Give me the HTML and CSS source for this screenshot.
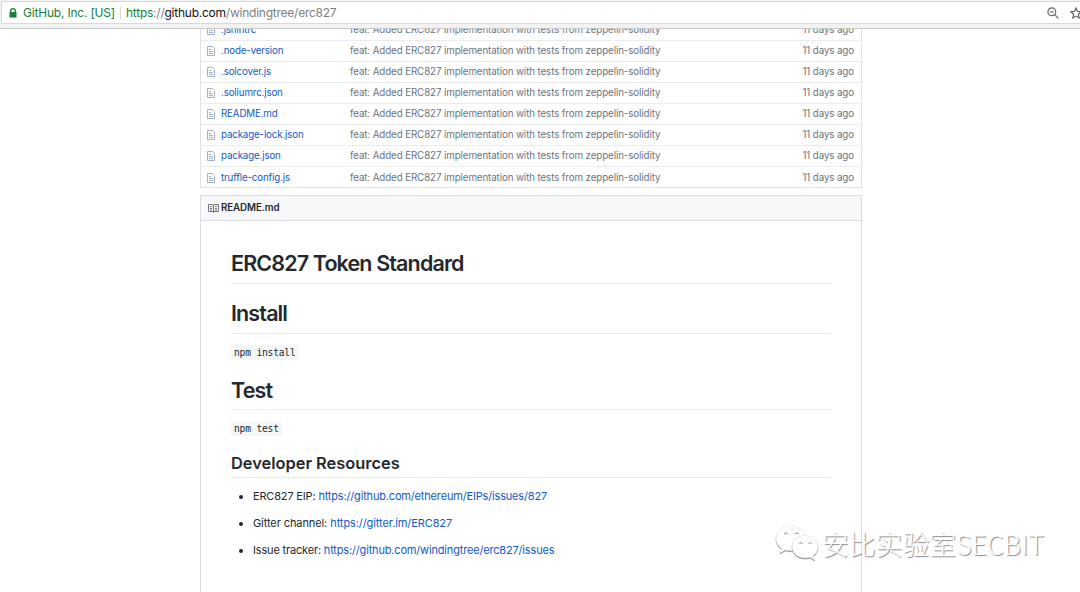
FILE: index.html
```html
<!DOCTYPE html>
<html lang="en">
<head>
    <meta charset="UTF-8">
    <meta name="viewport" content="width=device-width, initial-scale=1.0">
    <title>windingtree/erc827</title>
    <link rel="stylesheet" href="styles.css">
</head>
<body>

<svg class="defs" width="0" height="0">
    <symbol id="file" viewBox="0 0 9 11">
        <path d="M.5 1.500h5L7.500 3.500V10.500h-7zM2 4.500h2M2 6.500h4M2 8.500h4"/>
    </symbol>
</svg>

<div class="toolbar">
    <div class="address">
        <svg class="lock" viewBox="0 0 8 10"><path d="M1 4V3a3 3 0 0 1 6 0v1h.5v5.500h-7V4zm1.300 0h3.400V3a1.700 1.700 0 0 0-3.400 0z"/></svg>
        <span class="company">GitHub, Inc. [US]</span>
        <span class="divider"></span>
        <span class="url"><span class="scheme">https</span>://<span class="host">github.com</span>/windingtree/erc827</span>
        <svg class="zoom" viewBox="0 0 12 12"><circle cx="4.800" cy="4.800" r="3.900"/><path d="M3 4.800h3.600M7.700 7.700l3.600 3.600"/></svg>
        <svg class="star" viewBox="0 0 12 12"><path d="M6 1l1.500 3.400 3.700.4-2.800 2.500.8 3.700L6 9.100 2.800 11l.8-3.700L.8 4.800l3.700-.4z"/></svg>
    </div>
</div>

<div class="page">
    <div class="files">
        <div class="row"><svg class="icon"><use href="#file"/></svg><a>.jshintrc</a><span class="message">feat: Added ERC827 implementation with tests from zeppelin-solidity</span><span class="age">11 days ago</span></div>
        <div class="row"><svg class="icon"><use href="#file"/></svg><a>.node-version</a><span class="message">feat: Added ERC827 implementation with tests from zeppelin-solidity</span><span class="age">11 days ago</span></div>
        <div class="row"><svg class="icon"><use href="#file"/></svg><a>.solcover.js</a><span class="message">feat: Added ERC827 implementation with tests from zeppelin-solidity</span><span class="age">11 days ago</span></div>
        <div class="row"><svg class="icon"><use href="#file"/></svg><a>.soliumrc.json</a><span class="message">feat: Added ERC827 implementation with tests from zeppelin-solidity</span><span class="age">11 days ago</span></div>
        <div class="row"><svg class="icon"><use href="#file"/></svg><a>README.md</a><span class="message">feat: Added ERC827 implementation with tests from zeppelin-solidity</span><span class="age">11 days ago</span></div>
        <div class="row"><svg class="icon"><use href="#file"/></svg><a>package-lock.json</a><span class="message">feat: Added ERC827 implementation with tests from zeppelin-solidity</span><span class="age">11 days ago</span></div>
        <div class="row"><svg class="icon"><use href="#file"/></svg><a>package.json</a><span class="message">feat: Added ERC827 implementation with tests from zeppelin-solidity</span><span class="age">11 days ago</span></div>
        <div class="row"><svg class="icon"><use href="#file"/></svg><a>truffle-config.js</a><span class="message">feat: Added ERC827 implementation with tests from zeppelin-solidity</span><span class="age">11 days ago</span></div>
    </div>

    <div class="readme">
        <div class="readme-title">
            <svg class="book" viewBox="0 0 11 10"><path d="M.5 1.500h4.500l.5.500.5-.5h4.500v7H6l-.5 1-.5-1H.5zM5.500 2v7M2 3.500h2M2 5.500h2M2 7h2M7 3.500h2M7 5.500h2M7 7h2"/></svg>
            <span>README.md</span>
        </div>
        <div class="markdown">
            <h1>ERC827 Token Standard</h1>
            <h1 class="install">Install</h1>
            <p><code>npm install</code></p>
            <h1 class="test">Test</h1>
            <p><code>npm test</code></p>
            <h2>Developer Resources</h2>
            <ul>
                <li>ERC827 EIP: <a>https://github.com/ethereum/EIPs/issues/827</a></li>
                <li class="gitter">Gitter channel: <a>https://gitter.im/ERC827</a></li>
                <li>Issue tracker: <a>https://github.com/windingtree/erc827/issues</a></li>
            </ul>
        </div>
    </div>
</div>

<div class="watermark">
    <svg viewBox="0 0 46 38">
        <path class="bubble" d="M16 1C7.500 1 1 6.500 1 13.500c0 4 2 7.500 5.500 10L5 28l5.500-3c2 .6 3.500.8 5.500.8 8.500 0 15-5.500 15-12.300S24.500 1 16 1z"/>
        <path class="bubble" d="M30 10.500c-7.500 0-13 5-13 11.300S22.500 33 30 33c1.800 0 3.300-.2 5-.7l4.500 2.700-1.300-4.200c3-2.200 4.800-5.200 4.800-9 0-6.300-5.500-11.300-13-11.300z"/>
        <path class="eyes" d="M9 9q1.800-2.500 3.800 0M20 9q1.800-2.500 3.800 0M24.500 18.500q1.300-1.800 3 0M33.500 18.500q1.300-1.800 3 0"/>
    </svg>
    <span>安比实验室SECBIT</span>
</div>

</body>
</html>
```
FILE: styles.css
```css
* {
    box-sizing: border-box;
}

body {
    margin: 0;
    height: 592px;
    overflow: hidden;
    display: flex;
    flex-direction: column;
    background: #fff;
    color: #24292e;
    font-family: Inter, "Liberation Sans", sans-serif;
    font-size: 9.75px;
    white-space: nowrap;
}

a {
    color: #1259c9;
}

.defs {
    position: absolute;
}

.toolbar {
    height: 29px;
    flex: none;
    padding: 1px 0 4px 1px;
    background: #f2f2f2;
    border-bottom: 1px solid #c9c9c9;
}

.address {
    height: 23px;
    display: flex;
    align-items: center;
    padding-left: 7px;
    background: #fff;
    border: 1px solid #d9d9d9;
    border-right: none;
    border-radius: 2px 0 0 2px;
    font-size: 12px;
    letter-spacing: -0.2px;
    overflow: hidden;
}

.lock {
    width: 8px;
    height: 10px;
    margin-right: 6px;
    fill: #188038;
}

.company,
.scheme {
    color: #188038;
}

.divider {
    width: 1px;
    height: 13px;
    margin: 0 5px;
    background: #d8d8d8;
}

.url {
    color: #808080;
    letter-spacing: -0.24px;
}

.host {
    color: #111;
}

.zoom,
.star {
    width: 12px;
    height: 12px;
    flex: none;
    fill: none;
    stroke: #666;
    stroke-width: 1.2;
}

.zoom {
    margin-left: auto;
    margin-right: 11px;
}

.star {
    margin-right: -2px;
}

.page {
    flex: 1;
    min-height: 0;
    overflow: hidden;
    padding-left: 200px;
}

.files {
    width: 662px;
    margin-top: -9px;
    border: 1px solid #dfe2e5;
    border-top: none;
}

.row {
    height: 21px;
    display: flex;
    align-items: center;
    padding: 0 7px 1px 6px;
    border-bottom: 1px solid #eaecef;
    color: #6a737d;
    letter-spacing: -0.1px;
}

.row:last-child {
    height: 20px;
    padding-bottom: 0;
    border-bottom: none;
}

.icon {
    width: 9px;
    height: 11px;
    margin-right: 5px;
    fill: none;
    stroke: #a3b2c4;
}

.row a {
    width: 129px;
    letter-spacing: -0.15px;
}

.age {
    margin-left: auto;
}

.readme {
    width: 662px;
    height: 420px;
    margin-top: 7px;
    border: 1px solid #d9dce0;
}

.readme-title {
    height: 25px;
    display: flex;
    align-items: center;
    padding: 0 0 1px 7px;
    background: #f6f8fa;
    border-bottom: 1px solid #d9dce0;
    font-weight: 600;
    letter-spacing: -0.1px;
}

.book {
    width: 11px;
    height: 10px;
    margin-right: 2px;
    fill: none;
    stroke: #555;
    stroke-width: 0.8;
}

.markdown {
    padding: 30px 30px 0;
    font-size: 11px;
}

h1,
h2 {
    margin: 0;
    font-weight: 600;
    border-bottom: 1px solid #eaecef;
}

h1 {
    height: 33px;
    line-height: 25px;
    font-size: 21.5px;
    letter-spacing: -0.87px;
}

.install {
    margin-top: 17px;
}

.test {
    line-height: 27px;
}

.markdown p {
    height: 15px;
    margin: 11px 0 17px;
    line-height: 15px;
}

.markdown p code {
    display: block;
    width: fit-content;
    height: 15px;
    padding: 0 3px;
    background: #f5f6f6;
    border-radius: 2px;
    font-family: "DejaVu Sans Mono", monospace;
    font-size: 9.6px;
    letter-spacing: -0.18px;
}

h2 {
    height: 25px;
    line-height: 20px;
    font-size: 16.4px;
}

.markdown ul {
    margin: 11px 0 0;
    padding-left: 22px;
}

.markdown li {
    height: 14px;
    margin-bottom: 13px;
    line-height: 14px;
    letter-spacing: -0.17px;
}

.markdown .gitter {
    letter-spacing: -0.09px;
}

.watermark {
    position: absolute;
    left: 775px;
    top: 524px;
    display: flex;
    align-items: center;
    color: #fff;
    font-family: "Noto Sans CJK SC", sans-serif;
    font-size: 26.8px;
    font-weight: 300;
    line-height: 40px;
    text-shadow: 1px 1px 1px #888;
}

.watermark svg {
    width: 46px;
    height: 38px;
    margin-right: 1px;
}

.bubble {
    fill: #fff;
    stroke: #ddd;
    stroke-width: 0.5;
    filter: drop-shadow(0.5px 1px 0.3px #888);
}

.eyes {
    fill: none;
    stroke: #888;
}
```
